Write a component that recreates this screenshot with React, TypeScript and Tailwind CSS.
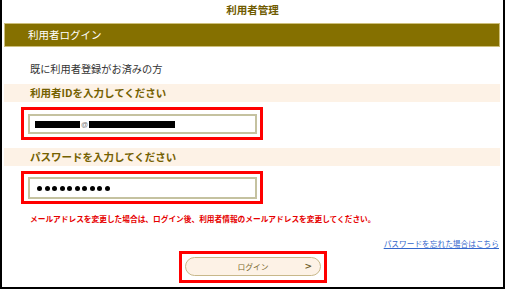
import React from 'react';

const jp = { fontFamily: '"Noto Sans CJK JP", "Noto Sans", sans-serif' };

function Band({ label }: { label: string }) {
  return (
    <div className="ml-[2px] mr-[3px] h-[18px] bg-[#fdf2e6] pl-[26px] text-[10.5px] font-bold leading-[18px] text-[#746000]">
      {label}
    </div>
  );
}

function Marked({ children, className = '' }: { children: React.ReactNode; className?: string }) {
  return (
    <div className={`border-[3px] border-[#ff0000] ${className}`}>{children}</div>
  );
}

export default function App() {
  return (
    <div className="w-[506px] h-[289px] bg-white overflow-hidden" style={jp}>
      <div className="w-[505px] h-[289px] border-l-2 border-r-2 border-b-2 border-black flex flex-col">
        <div className="h-[21px] text-center text-[10.5px] font-bold leading-[19px] text-[#6f5b00]">
          利用者管理
        </div>

        <div className="mt-[2px] ml-[2px] mr-[3px] h-[24px] bg-[#857000] border border-[#cdbf7a] pl-[23px] text-[10.5px] leading-[22px] text-white">
          利用者ログイン
        </div>

        <div className="mt-[13px] h-[18px] pl-[28px] text-[10.2px] leading-[18px] text-[#333333]">
          既に利用者登録がお済みの方
        </div>

        <div className="mt-[6px]">
          <Band label="利用者IDを入力してください" />
        </div>

        <Marked className="mt-[5px] ml-[19px] w-[242px] h-[33px]">
          <div className="ml-[4px] mt-[4px] w-[229px] h-[20px] border-2 border-[#c5c2a0] bg-white flex items-center pl-[5px]">
            <div className="w-[45px] h-[7px] bg-black" />
            <span className="mx-[1px] text-[7px] leading-none text-[#777777]" style={{ fontFamily: '"Liberation Sans", sans-serif' }}>@</span>
            <div className="w-[86px] h-[7px] bg-black" />
          </div>
        </Marked>

        <div className="mt-[8px]">
          <Band label="パスワードを入力してください" />
        </div>

        <Marked className="mt-[5px] ml-[19px] w-[242px] h-[33px]">
          <div className="ml-[4px] mt-[3px] w-[229px] h-[22px] border-2 border-[#c5c2a0] bg-white flex items-center gap-[2.5px] pl-[7px]">
            {Array.from({ length: 10 }).map((_, i) => (
              <div key={i} className="w-[5px] h-[5px] rounded-full bg-black" />
            ))}
          </div>
        </Marked>

        <div className="mt-[9px] h-[12px] pl-[28px] text-[7.7px] font-bold leading-[12px] text-[#e60000] whitespace-nowrap">
          メールアドレスを変更した場合は、ログイン後、利用者情報のメールアドレスを変更してください。
        </div>

        <div className="mt-[13px] h-[12px] pr-[4px] flex justify-end">
          <a href="#" className="text-[7.7px] leading-[12px] text-[#3366cc] underline whitespace-nowrap">
            パスワードを忘れた場合はこちら
          </a>
        </div>

        <Marked className="mt-[1px] ml-[177px] w-[148px] h-[32px] pl-[3px] pt-[3px]">
          <div className="relative w-[136px] h-[19px] rounded-full border border-[#c8b88a] bg-[#fdf2e6] text-center text-[7.8px] leading-[17px] text-[#7a6a30]">
            ログイン
            <span className="absolute right-[8px] top-0 text-[9px] font-bold leading-[17px] text-[#6e5e2a]" style={{ fontFamily: '"DejaVu Sans", sans-serif' }}>
              &gt;
            </span>
          </div>
        </Marked>
      </div>
    </div>
  );
}
